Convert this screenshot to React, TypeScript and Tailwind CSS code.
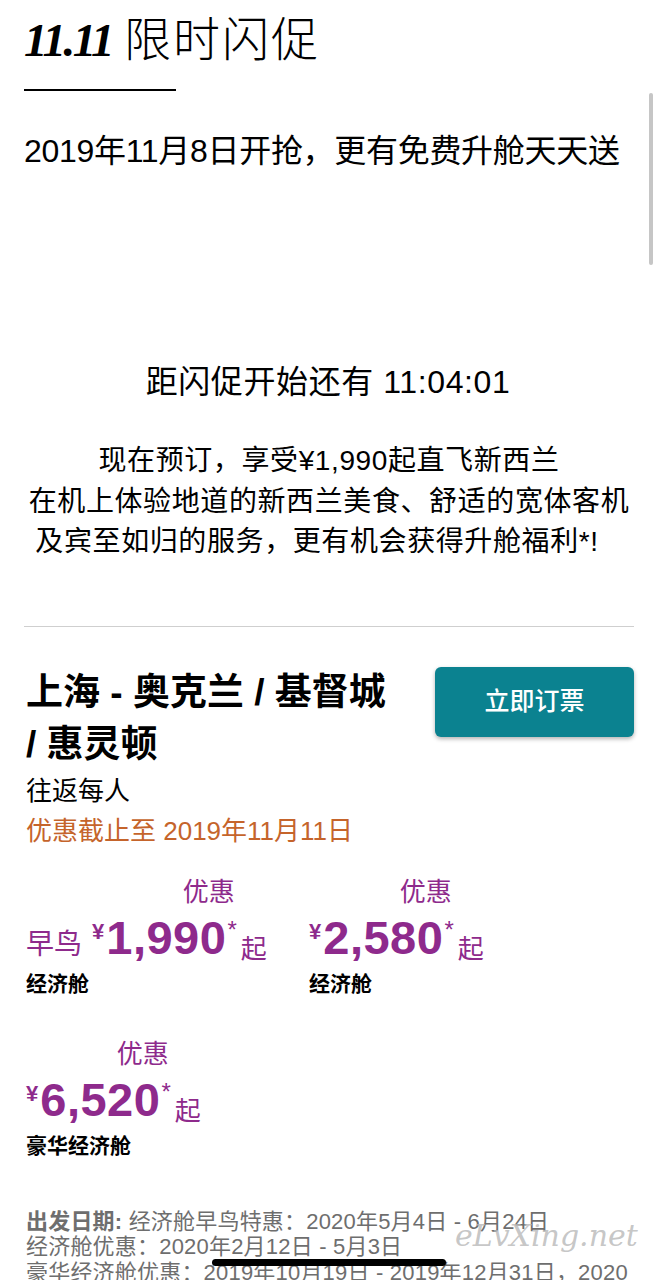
import React from "react";

const purple = "text-[#8e2a8c]";

function Price({
  prefix,
  amount,
}: {
  prefix?: string;
  amount: string;
}) {
  return (
    <div className={`flex items-end ${purple}`}>
      {prefix && (
        <span className="text-[28px] leading-[40px] mr-[10px] mb-[-2px]">{prefix}</span>
      )}
      <div className="flex flex-col items-end">
        <span className="text-[26px] leading-[34px] mr-[2px]">优惠</span>
        <div className="flex items-start mt-[4px]">
          <span className="text-[22px] leading-[26px] font-bold mt-[6px] mr-[2px]">¥</span>
          <span className="text-[47px] leading-[50px] font-bold tracking-[0.5px]">{amount}</span>
          <span className="text-[24px] leading-[26px] mt-[4px] ml-[1px]">*</span>
        </div>
      </div>
      <span className="text-[26px] leading-[36px] ml-[4px] mb-[-4px]">起</span>
    </div>
  );
}

export default function App() {
  return (
    <div className="relative w-[660px] h-[1280px] bg-white text-black [font-family:'Liberation_Sans','Noto_Sans_CJK_SC',sans-serif] overflow-hidden">
      {/* scrollbar */}
      <div className="absolute left-[649px] top-[93px] w-[4px] h-[172px] rounded-full bg-[#c6c6c6]" />

      <div className="pl-[24px] pr-[26px]">
        {/* title */}
        <div className="pt-[12px] flex items-baseline">
          <span className="[font-family:'Liberation_Serif',serif] italic font-bold text-[47px] leading-[55px] tracking-[-2.5px]">
            11.11
          </span>
          <span className="ml-[12px] text-[47px] leading-[55px] font-light tracking-[2px]">限时闪促</span>
        </div>
        <div className="mt-[21px] w-[152px] h-[2px] bg-black" />

        <div className="mt-[40px] text-[32px] leading-[40px] tracking-[-0.3px]">
          2019年11月8日开抢，更有免费升舱天天送
        </div>

        <div className="mt-[191px] text-center text-[32px] leading-[40px] tracking-[0.6px] pr-[2px]">
          距闪促开始还有 11:04:01
        </div>

        <div className="mt-[39px] text-center text-[28px] leading-[40.5px] tracking-[0.6px]">
          <div>现在预订，享受¥1,990起直飞新西兰</div>
          <div>在机上体验地道的新西兰美食、舒适的宽体客机</div>
          <div className="pr-[24px]">及宾至如归的服务，更有机会获得升舱福利*!</div>
        </div>

        <div className="mt-[63px] h-px bg-[#cfcfcf]" />

        {/* route */}
        <div className="mt-[40px] flex items-start justify-between">
          <div className="w-[380px] pl-[2px] text-[37px] leading-[52px] font-bold">
            上海 - 奥克兰 / 基督城 / 惠灵顿
          </div>
          <button className="w-[199px] h-[70px] rounded-[6px] bg-[#0b8290] text-white text-[25px] font-medium shadow-[0_2px_4px_rgba(0,0,0,0.3)]">
            立即订票
          </button>
        </div>
        <div className="pl-[2px] text-[26px] leading-[40px]">往返每人</div>
        <div className="pl-[2px] text-[26px] leading-[40px] text-[#c5642b]">优惠截止至 2019年11月11日</div>

        {/* prices */}
        <div className="mt-[24px] pl-[2px] flex">
          <div className="w-[283px]">
            <Price prefix="早鸟" amount="1,990" />
            <div className="mt-[6px] text-[21px] leading-[30px] font-bold">经济舱</div>
          </div>
          <div>
            <Price amount="2,580" />
            <div className="mt-[6px] text-[21px] leading-[30px] font-bold">经济舱</div>
          </div>
        </div>

        <div className="mt-[38px] pl-[2px]">
          <Price amount="6,520" />
          <div className="mt-[6px] text-[21px] leading-[30px] font-bold">豪华经济舱</div>
        </div>

        <div className="mt-[48px] pl-[2px] text-[22px] leading-[25.5px] text-[#6e6e6e] whitespace-nowrap tracking-[0.2px]">
          <div>
            <span className="font-bold">出发日期:</span> 经济舱早鸟特惠：2020年5月4日 - 6月24日
          </div>
          <div>经济舱优惠：2020年2月12日 - 5月3日</div>
          <div>豪华经济舱优惠：2019年10月19日 - 2019年12月31日，2020</div>
        </div>
      </div>

      {/* watermark */}
      <div className="absolute left-[455px] top-[1216px] [font-family:'DejaVu_Serif',serif] italic text-[30px] leading-[40px] text-[#b8b8b8]/80">
        eLvXing.net
      </div>
      {/* home indicator */}
      <div className="absolute left-[212px] top-[1259px] w-[234px] h-[7px] rounded-full bg-black" />
    </div>
  );
}
